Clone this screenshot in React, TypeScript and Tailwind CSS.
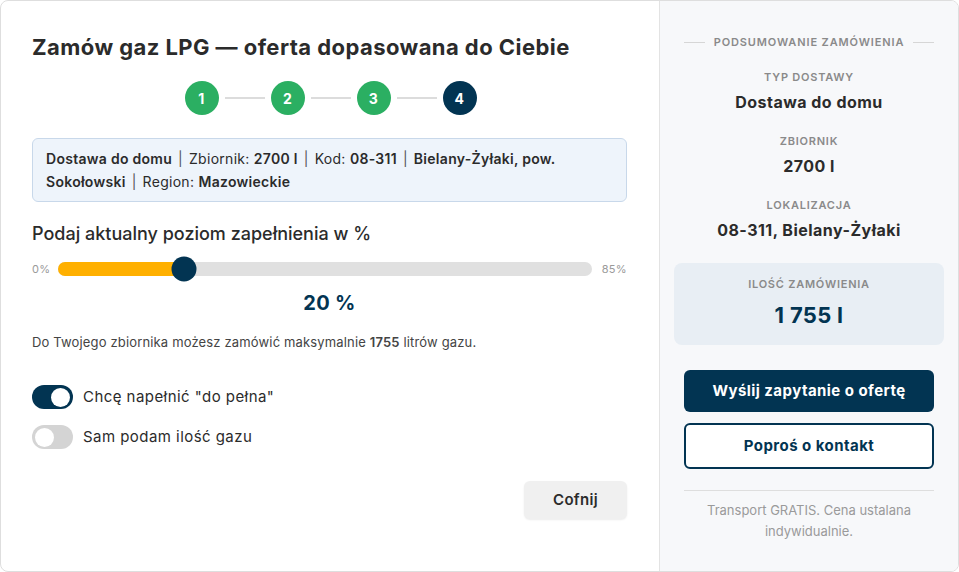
import { useState } from "react";

const font = { fontFamily: "Inter, 'Noto Sans', sans-serif" };

function Step({ n, active }: { n: number; active?: boolean }) {
  return (
    <div
      className={`flex h-[34px] w-[34px] items-center justify-center rounded-full text-[14px] font-bold text-white ${
        active ? "bg-[#023452]" : "bg-[#2baf62]"
      }`}
    >
      {n}
    </div>
  );
}

function Toggle({ on, label }: { on: boolean; label: string }) {
  return (
    <div className="flex items-center gap-[10px]">
      <div
        className={`flex h-[24px] w-[41px] items-center rounded-full p-[3px] ${
          on ? "justify-end bg-[#023452]" : "justify-start bg-[#d4d4d4]"
        }`}
      >
        <div className="h-[19px] w-[19px] rounded-full bg-white" />
      </div>
      <span className="text-[15px] tracking-[0.03em] text-[#2b2b2b]">{label}</span>
    </div>
  );
}

function SummaryItem({ label, value }: { label: string; value: string }) {
  return (
    <div className="flex flex-col items-center">
      <div className="text-[11px] font-semibold leading-4 tracking-[0.07em] text-[#8a8a8a]">
        {label}
      </div>
      <div className="mt-[5px] text-[16px] font-bold leading-6 tracking-[0.03em] text-[#2b2b2b]">
        {value}
      </div>
    </div>
  );
}

const Sep = () => <span className="px-[6px] text-[#555]">|</span>;

export default function App() {
  const [level] = useState(20);
  const max = 85;
  const pct = (level / max) * 100;

  return (
    <div style={font} className="h-[572px] w-[959px] bg-white tracking-[0.02em]">
      <div className="flex h-full w-full overflow-hidden rounded-lg border border-[#dedede]">
        {/* left column */}
        <div className="flex w-[658px] flex-col pl-[31px] pr-8 pt-8">
          <h1 className="text-[22px] font-bold leading-7 tracking-[0.02em] text-[#2b2b2b]">
            Zamów gaz LPG — oferta dopasowana do Ciebie
          </h1>

          <div className="mt-5 flex items-center justify-center gap-[6px] pl-[2px]">
            <Step n={1} />
            <div className="h-[2px] w-[40px] bg-[#dcdcdc]" />
            <Step n={2} />
            <div className="h-[2px] w-[40px] bg-[#dcdcdc]" />
            <Step n={3} />
            <div className="h-[2px] w-[40px] bg-[#dcdcdc]" />
            <Step n={4} active />
          </div>

          <div className="mt-[23px] rounded-md border border-[#c8d8ea] bg-[#eef4fb] px-[13px] py-2 text-[14px] leading-[23px] tracking-[0.02em] text-[#2b2b2b]">
            <b className="font-semibold">Dostawa do domu</b>
            <Sep />
            Zbiornik: <b className="font-semibold">2700 l</b>
            <Sep />
            Kod: <b className="font-semibold">08-311</b>
            <Sep />
            <b className="font-semibold">Bielany-Żyłaki, pow.</b>{" "}
            <b className="font-semibold">Sokołowski</b>
            <Sep />
            Region: <b className="font-semibold">Mazowieckie</b>
          </div>

          <h2 className="mt-5 text-[18px] font-medium leading-6 tracking-normal text-[#2b2b2b]">
            Podaj aktualny poziom zapełnienia w %
          </h2>

          <div className="mt-[11px] flex h-6 items-center gap-[10px] text-[11px] text-[#9a9a9a]">
            <span className="w-4">0%</span>
            <div className="relative h-[14px] flex-1 rounded-full bg-[#e0e0e0]">
              <div
                className="h-full rounded-full bg-[#ffb000]"
                style={{ width: `${pct}%` }}
              />
              <div
                className="absolute top-1/2 h-[25px] w-[25px] -translate-x-1/2 -translate-y-1/2 rounded-full bg-[#023452]"
                style={{ left: `${pct}%` }}
              />
            </div>
            <span>85%</span>
          </div>

          <div className="mt-2 text-center text-[20px] font-bold leading-7 text-[#023452]">
            {level} %
          </div>

          <p className="mt-[15px] text-[13px] leading-5 tracking-[0.012em] text-[#444]">
            Do Twojego zbiornika możesz zamówić maksymalnie{" "}
            <b className="font-semibold">1755</b> litrów gazu.
          </p>

          <div className="mt-[33px] flex flex-col gap-4">
            <Toggle on label='Chcę napełnić "do pełna"' />
            <Toggle on={false} label="Sam podam ilość gazu" />
          </div>

          <div className="mt-8 flex justify-end">
            <button className="h-[38px] w-[103px] rounded-md bg-[#f0f0f0] text-[15px] font-semibold text-[#2b2b2b] shadow-[0_1px_2px_rgba(0,0,0,0.08)]">
              Cofnij
            </button>
          </div>
        </div>

        {/* right column */}
        <div className="flex flex-1 flex-col border-l border-[#e3e3e3] bg-[#f7f8fa] px-[24px] pt-[33px]">
          <div className="flex items-center gap-[9px]">
            <div className="h-px flex-1 bg-[#d6d6d6]" />
            <span className="text-[11px] font-semibold leading-4 tracking-[0.08em] text-[#8a8a8a]">
              PODSUMOWANIE ZAMÓWIENIA
            </span>
            <div className="h-px flex-1 bg-[#d6d6d6]" />
          </div>

          <div className="mt-[19px] flex flex-col gap-[19px]">
            <SummaryItem label="TYP DOSTAWY" value="Dostawa do domu" />
            <SummaryItem label="ZBIORNIK" value="2700 l" />
            <SummaryItem label="LOKALIZACJA" value="08-311, Bielany-Żyłaki" />
          </div>

          <div className="-mx-[10px] mt-[21px] flex flex-col items-center rounded-lg bg-[#e8eef4] pb-[15px] pt-[13px]">
            <div className="text-[11px] font-semibold leading-4 tracking-[0.07em] text-[#8a8a8a]">
              ILOŚĆ ZAMÓWIENIA
            </div>
            <div className="mt-2 text-[22px] font-bold leading-[30px] text-[#023452]">
              1 755 l
            </div>
          </div>

          <button className="mt-[25px] h-[42px] rounded-md bg-[#023452] text-[15px] font-bold tracking-[0.03em] text-white">
            Wyślij zapytanie o ofertę
          </button>
          <button className="mt-[11px] h-[46px] rounded-md border-2 border-[#023452] bg-white text-[15px] font-bold tracking-[0.03em] text-[#023452]">
            Poproś o kontakt
          </button>

          <div className="mt-[21px] h-px bg-[#dedede]" />

          <p className="mt-[9px] text-center text-[13px] leading-[21px] tracking-normal text-[#9a9a9a]">
            Transport GRATIS. Cena ustalana indywidualnie.
          </p>
        </div>
      </div>
    </div>
  );
}
